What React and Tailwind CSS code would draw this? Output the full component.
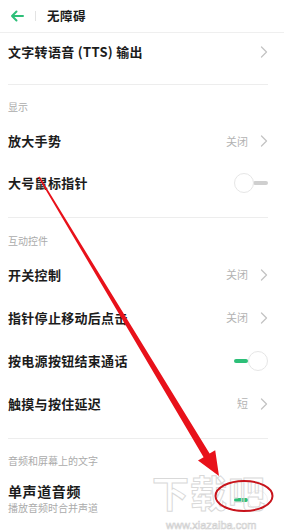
import React from "react";

const FONT = { fontFamily: '"Noto Sans CJK SC", "Noto Sans", sans-serif' };

function Chevron() {
  return (
    <svg width="8" height="12" viewBox="0 0 8 12" className="shrink-0">
      <path d="M1.5 1 L6.5 6 L1.5 11" fill="none" stroke="#c4c4c4" strokeWidth="1.3" strokeLinecap="round" strokeLinejoin="round" />
    </svg>
  );
}

function Toggle({ on, faint }) {
  return (
    <div className="relative w-[34px] h-[20px] shrink-0">
      {on ? (
        <>
          <div className="absolute left-0 top-[8px] w-[14px] h-[4px] rounded-full bg-[#2dbf78]" />
          <div className={`absolute right-0 top-0 w-[20px] h-[20px] rounded-full bg-white border ${faint ? "border-[#f2f2f2]" : "border-[#e6e6e6]"}`} />
        </>
      ) : (
        <>
          <div className="absolute right-0 top-[8px] w-[15px] h-[4px] rounded-full bg-[#cfcfcf]" />
          <div className="absolute left-0 top-0 w-[20px] h-[20px] rounded-full bg-white border border-[#e6e6e6]" />
        </>
      )}
    </div>
  );
}

function Row({ title, value, chevron, toggle, h = "h-[43px]" }) {
  return (
    <div className={`flex items-center ${h}`}>
      <div className="flex-1 text-[13px] font-semibold text-[#1c1c1c] tracking-[0.3px] leading-[16px] whitespace-nowrap">{title}</div>
      {value && <div className="text-[11px] text-[#b3b3b3] mr-[12px]">{value}</div>}
      {chevron && <Chevron />}
      {toggle}
    </div>
  );
}

function Label({ children, h = "h-[35px]", pt = "pt-[15px]" }) {
  return (
    <div className={`${h} ${pt} text-[10px] leading-[14px] text-[#ababab]`}>{children}</div>
  );
}

function Divider() {
  return <div className="h-px bg-[#ededed]" />;
}

export default function App() {
  return (
    <div className="relative w-[284px] h-[532px] bg-white overflow-hidden" style={FONT}>
      {/* header */}
      <div className="h-[33px] flex items-center border-b border-[#efefef] pl-[10px]">
        <svg width="14" height="12" viewBox="0 0 14 12">
          <path d="M13 6 H2 M6.5 1.5 L2 6 L6.5 10.5" fill="none" stroke="#2dbf78" strokeWidth="2" strokeLinecap="round" strokeLinejoin="round" />
        </svg>
        <div className="ml-[11px] w-px h-[10px] bg-[#e3e3e3]" />
        <div className="ml-[11px] text-[12.5px] font-bold text-[#1c1c1c] tracking-[0.5px]">无障碍</div>
      </div>

      <div className="pl-[8px] pr-[16px]">
        <Row title="文字转语音 (TTS) 输出" chevron h="h-[38px]" />
        <div className="h-[13px]" />
        <Divider />

        <Label>显示</Label>
        <Row title="放大手势" value="关闭" chevron h="h-[42px]" />
        <Row title="大号鼠标指针" toggle={<Toggle on={false} />} h="h-[42px]" />
        <div className="h-[13px]" />
        <Divider />

        <Label pt="pt-[16px]">互动控件</Label>
        <Row title="开关控制" value="关闭" chevron />
        <Row title="指针停止移动后点击" value="关闭" chevron />
        <Row title="按电源按钮结束通话" toggle={<Toggle on />} />
        <Row title="触摸与按住延迟" value="短" chevron />
        <div className="h-[13px]" />
        <Divider />

        <Label>音频和屏幕上的文字</Label>
        <div className="flex items-center pt-[8px]">
          <div className="flex-1">
            <div className="text-[14px] font-semibold text-[#1c1c1c] tracking-[0.6px] leading-[18px]">单声道音频</div>
            <div className="mt-[1px] text-[10px] text-[#ababab] leading-[14px]">播放音频时合并声道</div>
          </div>
          <div className="mt-[2px]">
            <Toggle on faint />
          </div>
        </div>
      </div>

      {/* watermark */}
      <div className="absolute left-[152px] top-[472px] text-[37px] font-bold leading-[40px] text-transparent [-webkit-text-stroke:1px_#d9d9d9] tracking-[1px] pointer-events-none whitespace-nowrap">
        下载吧
      </div>
      <div className="absolute left-[166px] top-[519px] text-[11px] leading-[12px] text-transparent [-webkit-text-stroke:0.6px_#cfcfcf] pointer-events-none whitespace-nowrap" style={{ fontFamily: '"Liberation Sans", sans-serif' }}>
        www.xiazaiba.com
      </div>

      {/* red annotation */}
      <svg className="absolute inset-0 pointer-events-none" width="284" height="532" viewBox="0 0 284 532">
        <polygon
          points="38.4,177.4 203.6,457.2 198,460.6 219,476 215.2,450.2 209.6,453.6 39.6,176.6"
          fill="#e8111a"
        />
        <ellipse cx="244" cy="496" rx="28.5" ry="15" fill="none" stroke="#c8141c" strokeWidth="2" />
      </svg>
    </div>
  );
}
